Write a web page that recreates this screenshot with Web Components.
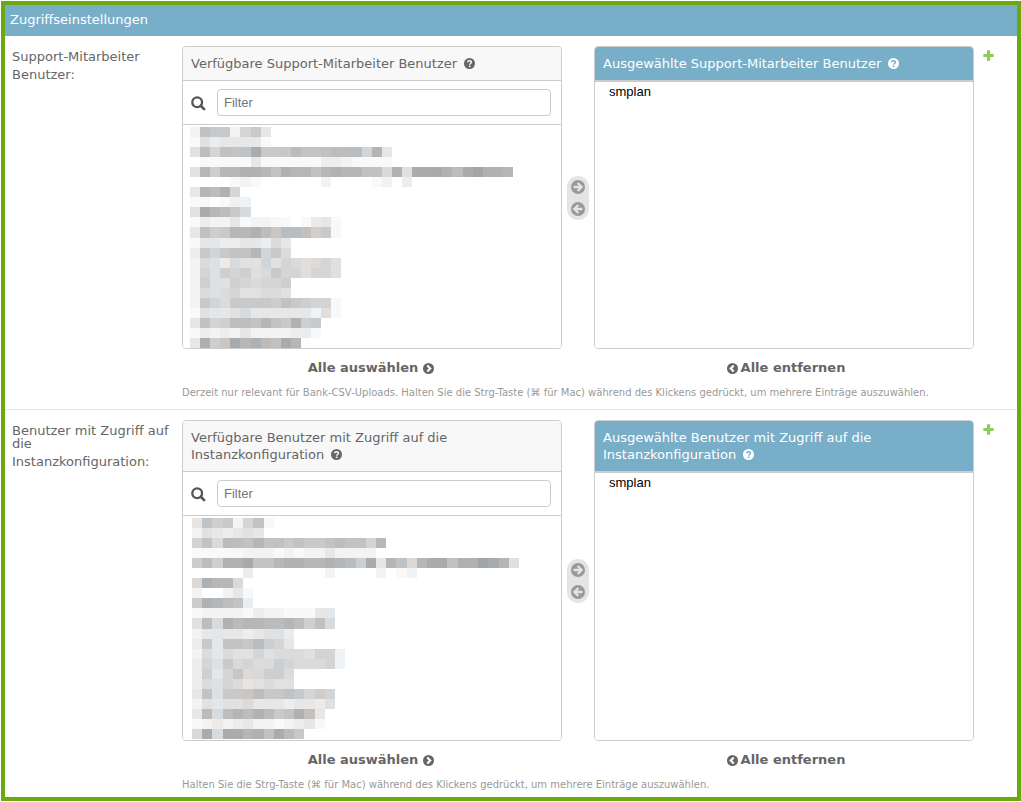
<!DOCTYPE html>
<html lang="de">
<head>
<meta charset="utf-8">
<title>Zugriffseinstellungen</title>
<style>
  body {
    margin: 0;
    padding: 1px 0 1px 1px;
    box-sizing: border-box;
    min-height: 100vh;
    display: flex;
    flex-direction: column;
    background: #fff;
    color: #666;
    font: 13px/17px "DejaVu Sans", Verdana, sans-serif;
  }
</style>
</head>
<body>
<settings-module>
  <h2 slot="title">Zugriffseinstellungen</h2>
  <filter-field
    label="Support-Mitarbeiter" label-end="Benutzer:"
    name="Support-Mitarbeiter Benutzer"
    chosen="smplan" mosaic="support"
    help="Derzeit nur relevant für Bank-CSV-Uploads. Halten Sie die Strg-Taste (⌘ für Mac) während des Klickens gedrückt, um mehrere Einträge auszuwählen."></filter-field>
  <filter-field
    style="--list-height: 224px; --mosaic-left: 9px; --mosaic-width: 327px"
    label="Benutzer mit Zugriff auf die" label-end="Instanzkonfiguration:"
    name="Benutzer mit Zugriff auf die Instanzkonfiguration"
    chosen="smplan" mosaic="config"
    help="Halten Sie die Strg-Taste (⌘ für Mac) während des Klickens gedrückt, um mehrere Einträge auszuwählen."></filter-field>
</settings-module>

<script>
const ICONS = {
  help: `<circle cx="8" cy="8" r="8" fill="currentColor"/><path d="M5.2 6.2C5.3 3.2 10.8 3.1 10.8 6.1C10.8 8 8.2 8 8.2 9.8" fill="none" stroke="var(--hole, #fff)" stroke-width="2.2"/><rect x="7" y="11" width="2.4" height="2.2" fill="var(--hole, #fff)"/>`,
  search: `<circle cx="6.6" cy="6.6" r="5.2" fill="none" stroke="currentColor" stroke-width="2.5"/><path d="M10.4 10.4L14 14" stroke="currentColor" stroke-width="2.8" stroke-linecap="round"/>`,
  add: `<path d="M5.8 0.5h4.6V5.7h5.1v4.6H10.4v5.2H5.8V10.3H0.5V5.7H5.8z" fill="currentColor"/>`,
  right: `<circle cx="8" cy="8" r="8" fill="currentColor"/><path d="M3 8H12M7.6 3.4L12.2 8L7.6 12.6" fill="none" stroke="var(--hole, #fff)" stroke-width="2.6"/>`,
  left: `<circle cx="8" cy="8" r="8" fill="currentColor"/><path d="M13 8H4M8.4 3.4L3.8 8L8.4 12.6" fill="none" stroke="var(--hole, #fff)" stroke-width="2.6"/>`,
  next: `<circle cx="8" cy="8" r="8" fill="currentColor"/><path d="M6.2 3.6L10.6 8L6.2 12.4" fill="none" stroke="var(--hole, #fff)" stroke-width="3"/>`,
  prev: `<circle cx="8" cy="8" r="8" fill="currentColor"/><path d="M9.8 3.6L5.4 8L9.8 12.4" fill="none" stroke="var(--hole, #fff)" stroke-width="3"/>`
};

// one hex digit per cell (0 = dark, f = white), + is warm, - is cool, . is empty
const MOSAICS = {
  support: [
    "d5+6-6d86b",
    "eac-bbbbe",
    "a485+55-1666+4-555+44-4-8-3+b-",
    "feeeeebeeeeeeccdeeee",
    "a37-332235-233-5+323-3-5+5-9+2a-111+24-10223-",
    "....ede......d....ed-.c",
    "b3+4-28",
    "ee-fed+d-",
    "a13469-",
    "ecddbedde+efec+be-",
    "b5+7-63324-6+4-4-5+76e-",
    "ebb-ccbbc9b",
    "c68-6553-8-69",
    "d9a-c+9-aa8-a89-a+98a-",
    "d8a-78-7a+9-688a+88a-",
    "d7a-a789-887",
    "d9a-98aa99a",
    "d68-966667+5-67-8-8+e-",
    "eab-ba9-bbbbbb-d-a+e-",
    "b5+8-74453-5627-6",
    "ecdcdbddddcc-e",
    "b2+7-6+1-32-4+5-13-"
  ],
  config: [
    "b+5-76d85e-",
    "dabcbab",
    "8+59-4+45-3-55+65-6654558-3",
    "eeeee+dddededdbdddd",
    "7+4-72-21+553223323-4-7-1b-3+5-9+3-115+2-20-1-3+a-",
    ".....c.......d....dfed-",
    "9+2-339-",
    "dffdbe-",
    "7+23-45c-",
    "eddddecddeeebb-",
    "a49-24+3-34+4-3-475+9-",
    "dbb-bbcbaac-",
    "c6b-556+4-7-8b-",
    "d9b-9aa8a-999a-8+8-d-",
    "c8a-69+8-997-89998d-",
    "c7b-86+99+7-7-9",
    "c9a-89b+a9aa",
    "b5a-666+46-6+5-6-87+8-",
    "dab-aa9bbbcbbc+a-",
    "b4+9-43+424+652-5+b",
    "edc+dc-bddedcbe-",
    "9+19-113-25-14+6-"
  ]
};

class UiIcon extends HTMLElement {
  constructor() {
    super();
    this.attachShadow({ mode: "open" });
  }

  connectedCallback() {
    this.shadowRoot.innerHTML = `
      <style>
        :host {
          display: inline-block;
          width: 11px;
          height: 11px;
          flex: none;
        }
        svg {
          display: block;
          width: 100%;
          height: 100%;
        }
      </style>
      <svg viewBox="0 0 16 16" aria-hidden="true">${ICONS[this.getAttribute("name")]}</svg>
    `;
  }
}

class PixelMosaic extends HTMLElement {
  constructor() {
    super();
    this.attachShadow({ mode: "open" });
  }

  connectedCallback() {
    const rows = MOSAICS[this.getAttribute("name")];
    let cells = "";
    rows.forEach((row, y) => {
      [...row.matchAll(/([0-9a-f.])([+-]?)/g)].forEach(([, level, tint], x) => {
        if (level === ".") return;
        const g = 165 + parseInt(level, 16) * 6;
        const r = tint === "-" ? g - 4 : g;
        const b = tint === "+" ? g - 5 : tint === "-" ? g + 2 : g;
        const mid = tint === "+" ? g - 3 : g;
        cells += `<rect x="${x}" y="${y}" width="1" height="1" fill="rgb(${r},${mid},${b})"/>`;
      });
    });
    this.shadowRoot.innerHTML = `
      <style>
        :host {
          display: block;
          pointer-events: none;
        }
        svg {
          display: block;
          width: var(--mosaic-width, 323px);
          max-width: 100%;
          height: 221px;
        }
      </style>
      <svg viewBox="0 0 32 22" preserveAspectRatio="none" shape-rendering="crispEdges" aria-hidden="true">${cells}</svg>
    `;
  }
}

class ListPanel extends HTMLElement {
  constructor() {
    super();
    this.attachShadow({ mode: "open" });
    this.shadowRoot.innerHTML = `
      <style>
        :host {
          display: flex;
          flex-direction: column;
          border: 1px solid #ccc;
          border-radius: 4px;
          overflow: hidden;
          background: #fff;
        }
        header {
          padding: 8px;
          border-bottom: 1px solid #ccc;
          background: #f8f8f8;
          --hole: #f8f8f8;
        }
        :host([chosen]) header {
          border-bottom-width: 2px;
          background: #79aec8;
          color: #fff;
          --hole: #79aec8;
        }
        ui-icon {
          margin-left: 3px;
          vertical-align: -1px;
        }
      </style>
      <header><slot name="title"></slot> <ui-icon name="help"></ui-icon></header>
      <slot name="filter"></slot>
      <slot></slot>
    `;
  }
}

class FilterField extends HTMLElement {
  constructor() {
    super();
    this.attachShadow({ mode: "open" });
  }

  connectedCallback() {
    const name = this.getAttribute("name");
    this.shadowRoot.innerHTML = `
      <style>
        :host {
          display: grid;
          grid-template-columns: 170px minmax(0, 1fr) 20px;
          padding: 10px 23px 9px 7px;
          border-bottom: 1px solid #e8e8e8;
        }
        :host(:last-of-type) {
          padding-bottom: 5px;
          border-bottom: 0;
        }
        .name {
          padding: 4px 10px 0 0;
          line-height: 13px;
        }
        .name span {
          display: block;
          line-height: 23px;
        }
        .selector {
          display: grid;
          grid-template-columns: minmax(0, 1fr) 32px minmax(0, 1fr);
        }
        .filter {
          display: flex;
          align-items: center;
          padding: 8px 10px 8px 8px;
          border-bottom: 1px solid #ccc;
        }
        .filter ui-icon {
          width: 15px;
          height: 15px;
          margin: 2px 11px 0 0;
          color: #555;
        }
        .filter input {
          flex: 1;
          min-width: 0;
          height: 27px;
          box-sizing: border-box;
          padding: 0 6px;
          border: 1px solid #ccc;
          border-radius: 4px;
          font: 13px "Liberation Sans", Arial, sans-serif;
        }
        .list {
          flex: 1;
          display: grid;
          min-height: var(--list-height, 223px);
        }
        .chosen {
          min-height: 0;
        }
        .list > * {
          grid-area: 1 / 1;
        }
        .list pixel-mosaic {
          margin: 2px 0 0 var(--mosaic-left, 7px);
        }
        select {
          width: 100%;
          height: 100%;
          padding: 0;
          border: 0;
          outline: 0;
          background: #fff;
          color: #000;
          font: 13px "Liberation Sans", Arial, sans-serif;
        }
        option {
          padding: 2px 14px;
        }
        .chooser {
          place-self: center;
          display: flex;
          flex-direction: column;
          gap: 8px;
          padding: 4px;
          border-radius: 11px;
          background: #e4e4e4;
          color: #999;
          --hole: #e4e4e4;
        }
        button {
          display: block;
          padding: 0;
          border: 0;
          background: none;
          color: inherit;
          cursor: pointer;
        }
        .chooser ui-icon {
          display: block;
          width: 14px;
          height: 14px;
        }
        .all {
          display: flex;
          justify-content: center;
          align-items: center;
          padding: 10px 0 9px;
          color: #666;
          font-weight: bold;
          text-decoration: none;
        }
        .all ui-icon {
          margin-top: 2px;
        }
        .add {
          grid-column: 1;
          gap: 5px;
          padding-right: 2px;
        }
        .remove {
          grid-column: 3;
          gap: 3px;
          padding-left: 4px;
        }
        .help {
          grid-column: 1 / -1;
          margin: 0;
          color: #999;
          font-size: 10px;
          line-height: 15px;
        }
        .plus {
          justify-self: end;
          margin-top: 4px;
          height: 11px;
          color: #8ccc58;
        }
        .plus ui-icon {
          display: block;
        }
      </style>
      <label class="name" for="from">${this.getAttribute("label")} <span>${this.getAttribute("label-end")}</span></label>
      <div class="selector">
        <list-panel>
          <label slot="title" for="from">Verfügbare ${name}</label>
          <div class="filter" slot="filter">
            <ui-icon name="search"></ui-icon>
            <input type="text" placeholder="Filter" aria-label="Filter">
          </div>
          <div class="list">
            <select id="from" multiple></select>
            <pixel-mosaic name="${this.getAttribute("mosaic")}"></pixel-mosaic>
          </div>
        </list-panel>
        <div class="chooser">
          <button type="button" aria-label="Auswählen"><ui-icon name="right"></ui-icon></button>
          <button type="button" aria-label="Entfernen"><ui-icon name="left"></ui-icon></button>
        </div>
        <list-panel chosen>
          <label slot="title" for="to">Ausgewählte ${name}</label>
          <div class="list chosen">
            <select id="to" multiple><option>${this.getAttribute("chosen")}</option></select>
          </div>
        </list-panel>
        <a class="all add" href="#">Alle auswählen <ui-icon name="next"></ui-icon></a>
        <a class="all remove" href="#"><ui-icon name="prev"></ui-icon> Alle entfernen</a>
        <p class="help">${this.getAttribute("help")}</p>
      </div>
      <button class="plus" type="button" aria-label="Hinzufügen"><ui-icon name="add"></ui-icon></button>
    `;
  }
}

class SettingsModule extends HTMLElement {
  constructor() {
    super();
    this.attachShadow({ mode: "open" });
    this.shadowRoot.innerHTML = `
      <style>
        :host {
          display: block;
          flex: 1;
          border: 4px solid #6aa90f;
        }
        ::slotted(h2) {
          margin: 0;
          padding: 6px 5px 8px;
          background: #79aec8;
          color: #fff;
          font-size: 13px;
          font-weight: 400;
        }
      </style>
      <slot name="title"></slot>
      <slot></slot>
    `;
  }
}

customElements.define("ui-icon", UiIcon);
customElements.define("pixel-mosaic", PixelMosaic);
customElements.define("list-panel", ListPanel);
customElements.define("filter-field", FilterField);
customElements.define("settings-module", SettingsModule);
</script>
</body>
</html>
